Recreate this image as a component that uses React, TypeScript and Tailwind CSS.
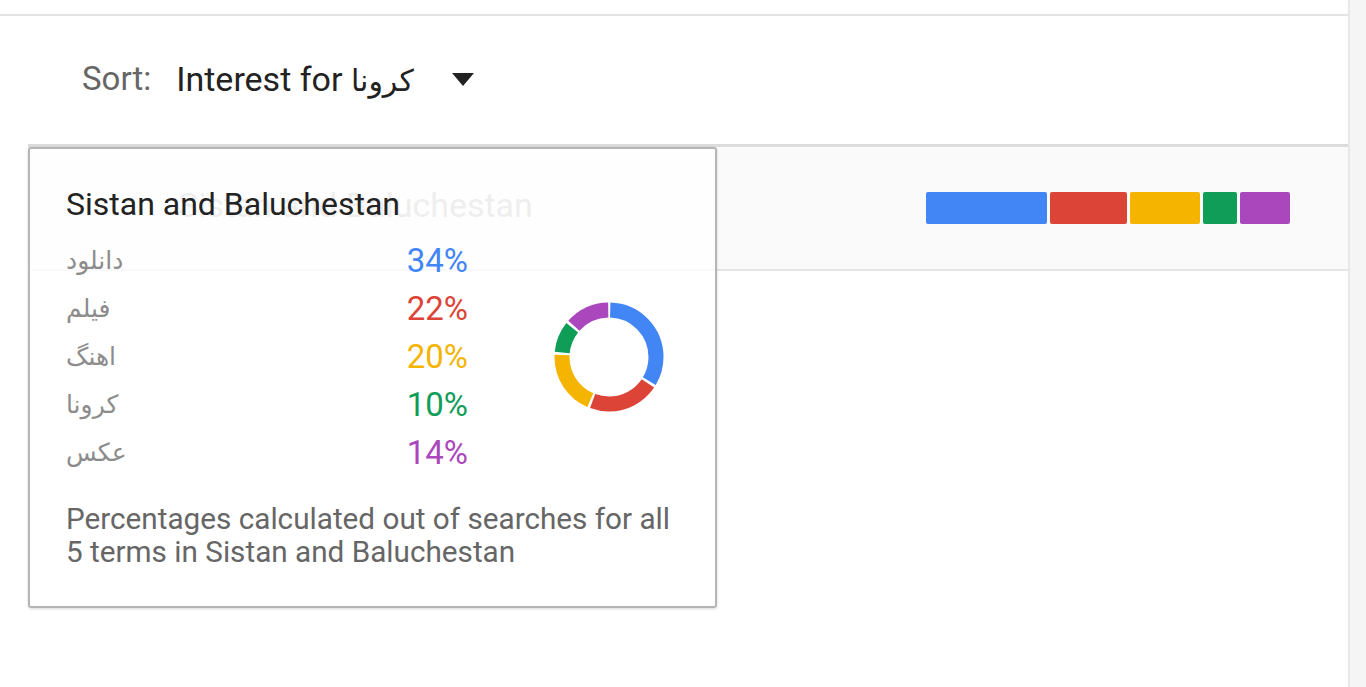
import React from 'react';

const terms = [
  { label: 'دانلود', value: 34, color: '#4285f4' },
  { label: 'فیلم', value: 22, color: '#db4437' },
  { label: 'اهنگ', value: 20, color: '#f4b400' },
  { label: 'کرونا', value: 10, color: '#0f9d58' },
  { label: 'عکس', value: 14, color: '#ab47bc' },
];

function Donut() {
  const r = 47;
  const c = 2 * Math.PI * r;
  let offset = 0;
  return (
    <svg width="110" height="110" viewBox="0 0 110 110" className="block">
      <g transform="rotate(-90 55 55)">
        {terms.map(t => {
          const len = (t.value / 100) * c;
          const seg = (
            <circle
              key={t.label}
              cx="55"
              cy="55"
              r={r}
              fill="none"
              stroke={t.color}
              strokeWidth="15"
              strokeDasharray={`${len - 2.5} ${c - len + 2.5}`}
              strokeDashoffset={-offset - 1.25}
            />
          );
          offset += len;
          return seg;
        })}
      </g>
    </svg>
  );
}

export default function App() {
  return (
    <div className="relative flex h-[687px] w-full overflow-hidden bg-white font-['Roboto',sans-serif]">
      <div className="w-[1348px] shrink-0">
        <div className="h-[14px]" />
        <div className="border-t-2 border-[#e3e3e3]" />

        {/* Sort control */}
        <div className="flex h-[128px] items-center pl-[82px] pb-[2px]">
          <span className="text-[33px] text-[#666]">Sort:</span>
          <span className="ml-[25px] text-[34px] text-[#222]">
            Interest for <span className="font-['DejaVu_Sans',sans-serif] text-[30px]">کرونا</span>
          </span>
          <svg width="24" height="15" viewBox="0 0 24 15" className="ml-[37px]">
            <path d="M1 1 L23 1 L12 14 Z" fill="#222" />
          </svg>
        </div>

        {/* Region list */}
        <div className="ml-[28px] border-t-[3px] border-[#dcdcdc]">
          <div className="flex h-[124px] items-center border-b-2 border-[#e6e6e6] bg-[#fafafa]">
            <span className="mb-[6px] ml-[150px] text-[34px] text-[#bcbcbc]">Sistan and Baluchestan</span>
            <div className="ml-auto mr-[58px] flex h-[32px] gap-[3px]">
              <div className="w-[121px] rounded-[2px] bg-[#4285f4]" />
              <div className="w-[77px] rounded-[2px] bg-[#db4437]" />
              <div className="w-[70px] rounded-[2px] bg-[#f4b400]" />
              <div className="w-[34px] rounded-[2px] bg-[#0f9d58]" />
              <div className="w-[50px] rounded-[2px] bg-[#ab47bc]" />
            </div>
          </div>
        </div>
      </div>

      {/* scrollbar strip */}
      <div className="flex-1 border-l-2 border-[#e8e8e8] bg-[#f5f5f5]" />

      {/* Tooltip (slightly see-through, as in the original) */}
      <div className="absolute left-[28px] top-[147px] h-[461px] w-[689px] rounded-[3px] border-2 border-[#b5b5b5] bg-white/75 pl-[36px] pt-[37px] shadow-[0_1px_3px_rgba(0,0,0,0.15)]">
        <div className="text-[32px] leading-[36px] text-[#222]">Sistan and Baluchestan</div>
        <div className="mt-[15px] flex items-center">
          <div className="w-[402px]">
            {terms.map(t => (
              <div key={t.label} className="flex h-[48px] items-center justify-between">
                <span className="font-['DejaVu_Sans',sans-serif] text-[25px] text-[#8c8c8c]">{t.label}</span>
                <span className="text-[33px]" style={{ color: t.color }}>
                  {t.value}%
                </span>
              </div>
            ))}
          </div>
          <div className="ml-[86px]">
            <Donut />
          </div>
        </div>
        <div className="mt-[25px] text-[29.7px] leading-[33px] text-[#666]">
          Percentages calculated out of searches for all
          <br />5 terms in Sistan and Baluchestan
        </div>
      </div>
    </div>
  );
}
